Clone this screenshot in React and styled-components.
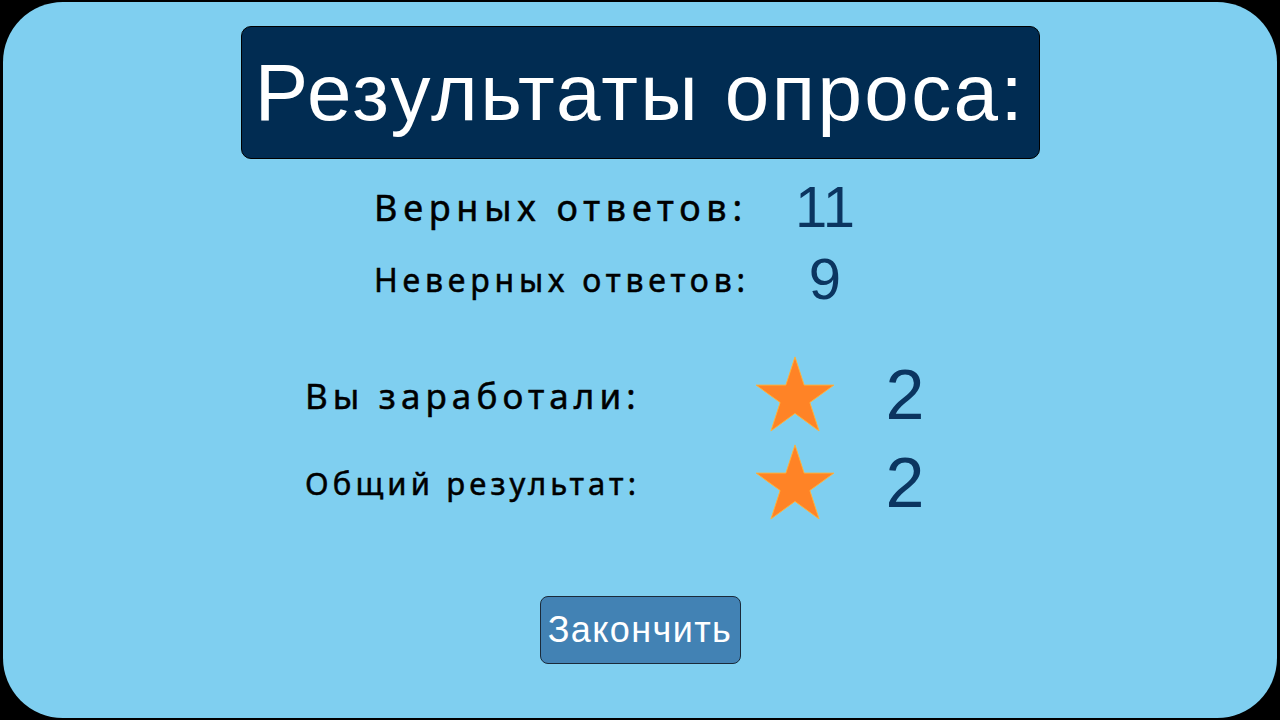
import React from 'react';
import styled, { createGlobalStyle } from 'styled-components';

const GlobalStyle = createGlobalStyle`
  html, body {
    margin: 0;
    padding: 0;
    background: #000;
  }
  body {
    width: 1280px;
    height: 720px;
    overflow: hidden;
  }
`;

const Screen = styled.div`
  box-sizing: border-box;
  width: 1274px;
  height: 716px;
  margin: 2px 3px;
  background-color: #7fcff0;
  border-radius: 60px;
  display: flex;
  flex-direction: column;
  align-items: center;
`;

const TitleBox = styled.div`
  box-sizing: border-box;
  margin-top: 24px;
  width: 799px;
  height: 133px;
  background-color: #012c52;
  border: 1px solid #000;
  border-radius: 10px;
  display: flex;
  align-items: center;
  justify-content: center;
`;

const Title = styled.h1`
  margin: 0;
  font-family: 'Liberation Sans', Arial, sans-serif;
  font-weight: 400;
  font-size: 80px;
  letter-spacing: 2.4px;
  color: #fff;
  white-space: nowrap;
`;

const Table = styled.div`
  display: grid;
  grid-template-columns: ${(p) => p.$columns};
  grid-auto-rows: ${(p) => p.$rowHeight}px;
  align-items: center;
  margin-top: ${(p) => p.$top || 0}px;
  margin-right: ${(p) => p.$shift || 0}px;
`;

const Label = styled.div`
  font-family: 'Noto Sans', 'DejaVu Sans', sans-serif;
  font-weight: 400;
  font-size: ${(p) => p.$size}px;
  letter-spacing: ${(p) => p.$spacing}px;
  -webkit-text-stroke: 0.5px #000;
  color: #000;
  white-space: nowrap;
`;

const Value = styled.div`
  font-family: 'Liberation Sans', Arial, sans-serif;
  font-size: ${(p) => p.$size}px;
  color: #0b3560;
  text-align: center;
  line-height: 1;
`;

const StarCell = styled.div`
  display: flex;
  justify-content: center;
  align-items: center;
`;

const Button = styled.button`
  box-sizing: border-box;
  margin-top: 69px;
  width: 201px;
  height: 68px;
  background-color: #4282b4;
  border: 1px solid #1a2a3a;
  border-radius: 8px;
  color: #fff;
  font-family: 'Liberation Sans', Arial, sans-serif;
  font-size: 36px;
  letter-spacing: 1.4px;
  padding: 0;
  cursor: pointer;
`;

const Star = () => (
  <svg width="84" height="82" viewBox="0 0 84 82">
    <polygon
      points="42,1 51.6,30.6 82.9,30.6 57.6,48.9 67.3,78.8 42,60.3 16.7,78.8 26.4,48.9 1.1,30.6 32.4,30.6"
      fill="#ff8326"
      stroke="#ffb23a"
      strokeWidth="1"
    />
  </svg>
);

const stats = [
  { label: 'Верных ответов:', value: '11', size: 36, spacing: 5.75 },
  { label: 'Неверных ответов:', value: '9', size: 32, spacing: 4.8 },
];

const rewards = [
  { label: 'Вы заработали:', value: '2', size: 35, spacing: 5.1 },
  { label: 'Общий результат:', value: '2', size: 31, spacing: 4.15 },
];

export default function App() {
  return (
    <>
      <GlobalStyle />
      <Screen>
        <TitleBox>
          <Title>Результаты опроса:</Title>
        </TitleBox>
        <Table $columns="384px 134px" $rowHeight={72} $top={12} $shift={14}>
          {stats.map((s) => (
            <React.Fragment key={s.label}>
              <Label $size={s.size} $spacing={s.spacing}>{s.label}</Label>
              <Value $size={58}>{s.value}</Value>
            </React.Fragment>
          ))}
        </Table>
        <Table $columns="450px 80px 140px" $rowHeight={88} $top={36}>
          {rewards.map((r) => (
            <React.Fragment key={r.label}>
              <Label $size={r.size} $spacing={r.spacing}>{r.label}</Label>
              <StarCell>
                <Star />
              </StarCell>
              <Value $size={70}>{r.value}</Value>
            </React.Fragment>
          ))}
        </Table>
        <Button>Закончить</Button>
      </Screen>
    </>
  );
}
